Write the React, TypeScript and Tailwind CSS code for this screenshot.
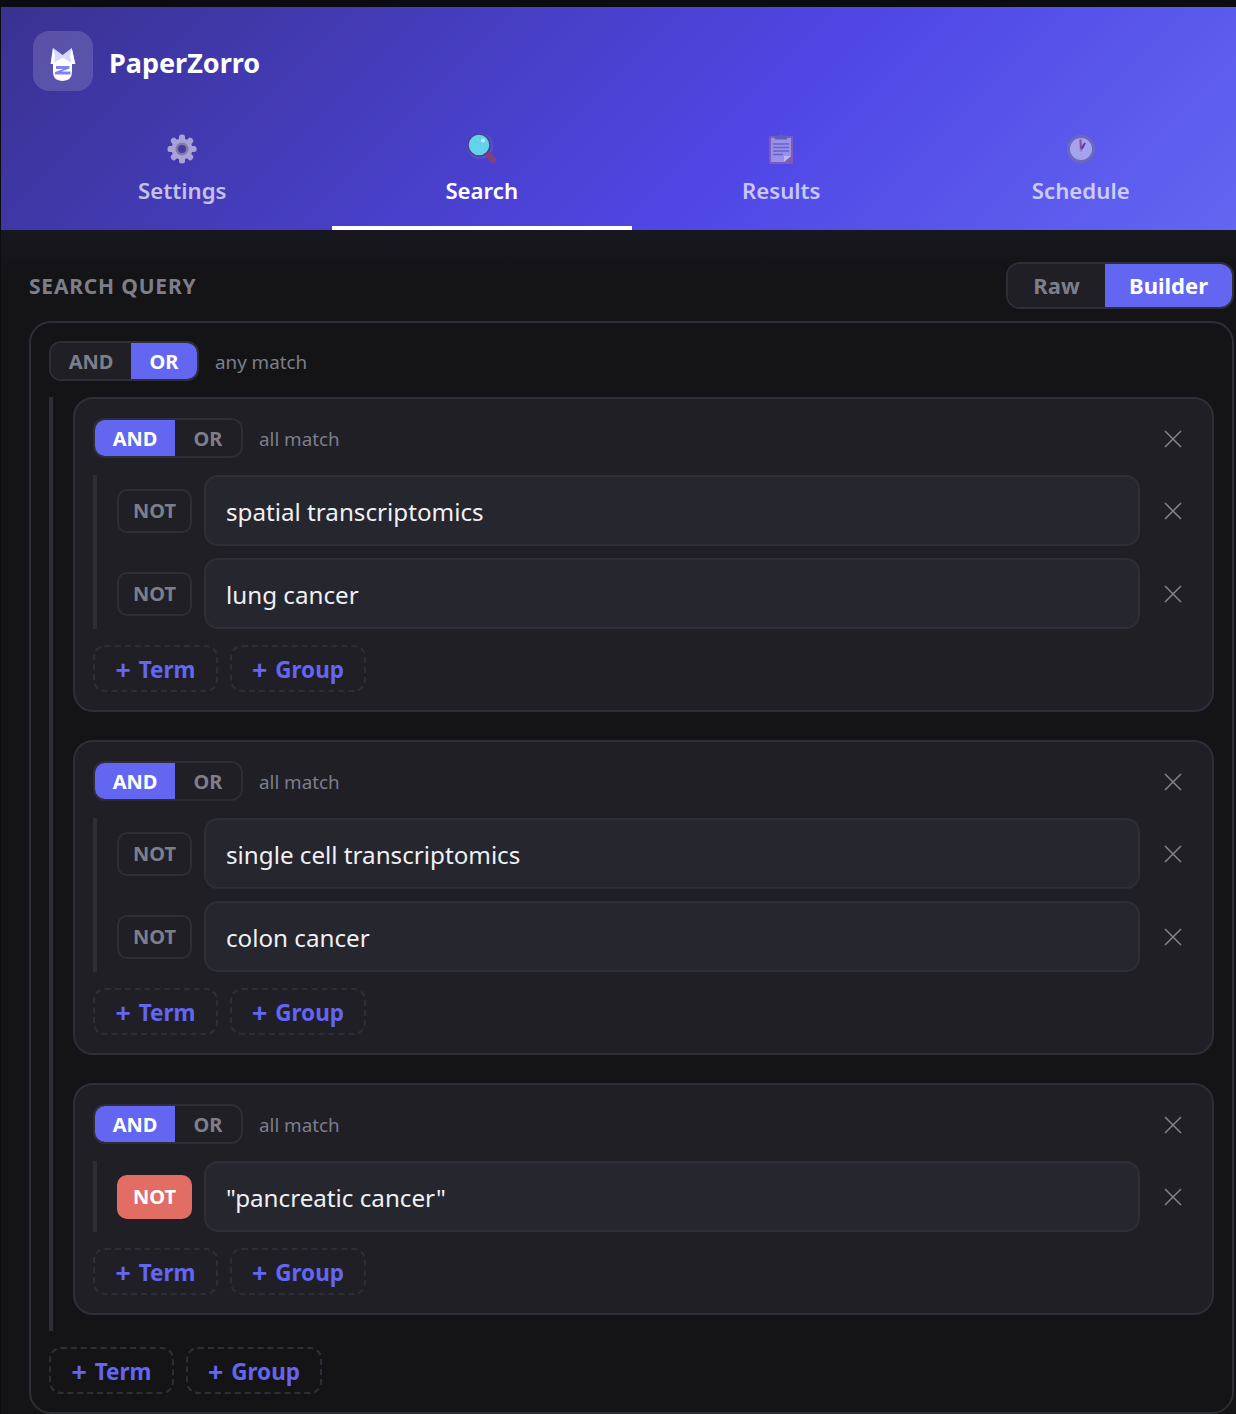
import type { ReactNode } from 'react';

const font = "font-['Noto_Sans','Open_Sans',sans-serif]";

function Logo() {
  return (
    <svg width="26" height="35" viewBox="0 0 26 35" className="mt-[7px]">
      <path d="M3 1 L0.7 17 H25.3 L21.7 1 L12.7 8 Z" fill="#d5d8ff" />
      <path d="M3 1 L0.7 17 H4 L5 9 Z M21.7 1 L25.3 17 H22 L20 9 Z" fill="#ffffff" />
      <path d="M3 16 L12.6 10.5 L22 16 V25 Q22 33.5 12.5 34 Q3 33.5 3 25 Z" fill="#ffffff" />
      <path d="M6 19 H19.5 V21.4 L11.4 24.4 H20.5 V27.5 H5 V25 L13.5 22 H6 Z" fill="#7f83f5" />
    </svg>
  );
}

function GearIcon() {
  const teeth = [0, 45, 90, 135, 180, 225, 270, 315];
  return (
    <svg width="30" height="30" viewBox="0 0 30 30">
      {teeth.map((a) => (
        <rect key={a} x="12" y="0.5" width="6" height="8" rx="2.5" fill="#a9a2d6" transform={`rotate(${a} 15 15)`} />
      ))}
      <circle cx="15" cy="15" r="10.5" fill="#a9a2d6" />
      <circle cx="15" cy="15" r="6.5" fill="#7f7aa8" />
      <circle cx="15" cy="15" r="4" fill="#463c9f" />
    </svg>
  );
}

function SearchIcon() {
  return (
    <svg width="32" height="32" viewBox="0 0 32 32">
      <circle cx="14" cy="13" r="13" fill="#8f8ae0" opacity="0.22" />
      <path d="M21 20 L27 27" stroke="#84407c" strokeWidth="6.5" strokeLinecap="round" />
      <circle cx="13" cy="12" r="11" fill="#63d3ec" stroke="#4a3f8f" strokeWidth="1.5" />
      <circle cx="17" cy="7.5" r="2" fill="#b6edf7" />
    </svg>
  );
}

function ClipboardIcon() {
  return (
    <svg width="24" height="30" viewBox="0 0 24 30">
      <rect x="0" y="2" width="24" height="28" rx="1" fill="#8f5fa8" />
      <path d="M2 4 H22 V22 L15 28 H2 Z" fill="#aaa4ea" />
      <path d="M15 28 L22 22 H15 Z" fill="#d6d3f5" />
      <path d="M6 1.5 H10 Q12 -1 14 1.5 H18 V5.5 H6 Z" fill="#6661b0" />
      <path d="M4 10 H20 M4 13.5 H20 M4 17 H20 M4 20.5 H14" stroke="#6d68c2" strokeWidth="1.4" />
    </svg>
  );
}

function ClockIcon() {
  return (
    <svg width="30" height="30" viewBox="0 0 30 30">
      <circle cx="15" cy="15" r="14" fill="#6f6cb2" />
      <circle cx="15" cy="15" r="11" fill="#b7b6ec" />
      <path d="M15 16 L14.4 5.5" stroke="#b23d78" strokeWidth="2" />
      <path d="M15.5 15 L19 9" stroke="#3f35a0" strokeWidth="2" />
      <circle cx="15" cy="16" r="1.6" fill="#8f8cc8" />
    </svg>
  );
}

function CloseIcon() {
  return (
    <svg width="18" height="18" viewBox="0 0 18 18" className="text-[#85858f]">
      <path d="M1 1 L17 17 M17 1 L1 17" stroke="currentColor" strokeWidth="1.5" />
    </svg>
  );
}

function Tab({ icon, label, active, dim }: { icon: ReactNode; label: string; active?: boolean; dim?: string }) {
  return (
    <div
      className={`flex h-[108px] w-[299.5px] flex-col items-center border-b-4 pt-3 ${
        active ? 'border-white' : 'border-transparent'
      }`}
    >
      <div className={`flex h-[30px] items-center justify-center ${dim ?? ''}`}>{icon}</div>
      <div className={`mt-3 text-[22.2px] leading-[30px] font-semibold ${active ? 'text-white' : 'text-white/70'}`}>
        {label}
      </div>
    </div>
  );
}

function LogicToggle({ mode, label }: { mode: 'AND' | 'OR'; label: string }) {
  const on = 'bg-[#6366f1] text-white';
  const off = 'bg-[#1f1f25] text-[#7e7e8b]';
  return (
    <div className="flex items-center gap-4">
      <div className="flex h-10 overflow-hidden rounded-xl border-2 border-[#2e2e38] text-[20px] leading-none font-bold">
        <div className={`flex w-[80px] items-center justify-center pt-px ${mode === 'AND' ? on : off}`}>AND</div>
        <div className={`flex w-[66px] items-center justify-center pt-px ${mode === 'OR' ? on : off}`}>OR</div>
      </div>
      <span className="pt-[2px] text-[18.8px] text-[#7e7e8b]">{label}</span>
    </div>
  );
}

function AddButton({ label, width }: { label: string; width: string }) {
  return (
    <div
      className={`flex h-[47px] items-center justify-center gap-2 rounded-xl border-2 border-dashed border-[#2e2e38] pt-[2px] text-[22.5px] font-bold text-[#6366f1] ${width}`}
    >
      <span className="font-['Liberation_Sans',sans-serif] text-[26px] leading-none">+</span>
      <span>{label}</span>
    </div>
  );
}

function AddButtons() {
  return (
    <div className="flex gap-3">
      <AddButton label="Term" width="w-[125px]" />
      <AddButton label="Group" width="w-[136px]" />
    </div>
  );
}

function TermRow({ text, negated }: { text: string; negated?: boolean }) {
  return (
    <div className="flex items-center gap-3">
      <div
        className={`flex h-11 w-[75px] shrink-0 items-center justify-center rounded-[10px] border-2 text-[20px] font-bold ${
          negated ? 'border-[#e26d64] bg-[#e26d64] text-white' : 'border-[#2e2e38] bg-[#1f1f25] text-[#7e7e8b]'
        }`}
      >
        NOT
      </div>
      <div className="flex h-[71px] flex-1 items-center rounded-[14px] border-2 border-[#2e2e38] bg-[#26262f] px-5 pt-1 text-[24.2px] text-[#f0f0f5]">
        {text}
      </div>
      <div className="flex w-[42px] shrink-0 justify-center">
        <CloseIcon />
      </div>
    </div>
  );
}

function Group({ terms }: { terms: { text: string; negated?: boolean }[] }) {
  return (
    <div className="flex flex-col gap-4 rounded-[20px] border-2 border-[#2e2e38] bg-[#1f1f25] px-[18px] pt-[19px] pb-[18px]">
      <div className="mb-px flex items-center justify-between">
        <LogicToggle mode="AND" label="all match" />
        <div className="flex w-[42px] justify-center pt-px">
          <CloseIcon />
        </div>
      </div>
      <div className="flex flex-col gap-3 border-l-4 border-[#2e2e38] pl-5">
        {terms.map((t) => (
          <TermRow key={t.text} text={t.text} negated={t.negated} />
        ))}
      </div>
      <AddButtons />
    </div>
  );
}

export default function App() {
  return (
    <div className={`h-[1414px] overflow-hidden bg-[#0b0b12] pt-[7px] pl-px ${font}`}>
      {/* Header */}
      <div className="h-[223px] bg-[linear-gradient(135deg,#3a3290_0%,#4f46e5_60%,#6366f1_100%)] pt-6 pl-[31.5px]">
        <div className="flex items-center gap-4">
          <div className="ml-[0.5px] flex size-[60px] items-center justify-center rounded-2xl bg-white/15">
            <Logo />
          </div>
          <div className="pt-1 text-[27px] font-bold text-white">PaperZorro</div>
        </div>
        <div className="mt-[31px] flex">
          <Tab icon={<GearIcon />} label="Settings" />
          <Tab icon={<SearchIcon />} label="Search" active />
          <Tab icon={<ClipboardIcon />} label="Results" dim="opacity-80" />
          <Tab icon={<ClockIcon />} label="Schedule" dim="opacity-80" />
        </div>
      </div>

      {/* Content */}
      <div className="h-[1184px] bg-gradient-to-b from-[#17171f] to-[#141416] to-[4%] pt-8 pl-7">
        <div className="flex items-center justify-between">
          <div className="pt-[2px] text-[21px] font-bold tracking-[0.8px] text-[#7e7e8b]">SEARCH QUERY</div>
          <div className="mr-[2px] flex h-[47px] w-[228px] overflow-hidden rounded-[14px] border-2 border-[#2e2e38] text-[22px] font-bold">
            <div className="flex w-[97px] items-center justify-center bg-[#1f1f25] text-[#7e7e8b]">Raw</div>
            <div className="flex flex-1 items-center justify-center bg-[#6366f1] text-white">Builder</div>
          </div>
        </div>
        <div className="mt-3 flex w-[1205px] flex-col gap-4 rounded-[22px] border-2 border-[#2e2e38] bg-[#141416] px-[18px] pt-[18px] pb-[18px]">
          <LogicToggle mode="OR" label="any match" />
          <div className="flex w-[1165px] flex-col gap-7 border-l-4 border-[#2e2e38] pb-4 pl-5">
            <Group terms={[{ text: 'spatial transcriptomics' }, { text: 'lung cancer' }]} />
            <Group terms={[{ text: 'single cell transcriptomics' }, { text: 'colon cancer' }]} />
            <Group terms={[{ text: '"pancreatic cancer"', negated: true }]} />
          </div>
          <AddButtons />
        </div>
      </div>
    </div>
  );
}
